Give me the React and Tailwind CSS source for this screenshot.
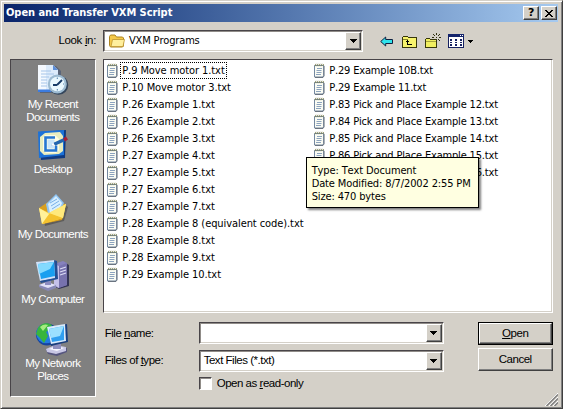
import React from "react";

const sunken =
  "border border-t-[#484448] border-l-[#484448] border-r-white border-b-white";
const raised =
  "border border-t-white border-l-white border-r-[#404040] border-b-[#404040] shadow-[inset_-1px_-1px_0_#808080]";
const listFont =
  "font-['DejaVu_Sans_Condensed','DejaVu_Sans',sans-serif] [font-stretch:condensed] [font-kerning:none] text-[11px]";

const leftFiles = [
  "P.9 Move motor 1.txt",
  "P.10 Move motor 3.txt",
  "P.26 Example 1.txt",
  "P.26 Example 2.txt",
  "P.26 Example 3.txt",
  "P.27 Example 4.txt",
  "P.27 Example 5.txt",
  "P.27 Example 6.txt",
  "P.27 Example 7.txt",
  "P.28 Example 8 (equivalent code).txt",
  "P.28 Example 8.txt",
  "P.28 Example 9.txt",
  "P.29 Example 10.txt",
];
const rightFiles = [
  "P.29 Example 10B.txt",
  "P.29 Example 11.txt",
  "P.83 Pick and Place Example 12.txt",
  "P.84 Pick and Place Example 13.txt",
  "P.85 Pick and Place Example 14.txt",
  "P.86 Pick and Place Example 15.txt",
  "P.87 Pick and Place Example 16.txt",
];

function NoteIcon() {
  return (
    <svg width="12" height="15" viewBox="0 0 12 15" className="shrink-0">
      <path d="M1.500 2.500h9.200v10l-1 1.500H1.500z" fill="#fbfcf4" stroke="#7488a0" />
      <path d="M11 3v10l-1 1.500H2" fill="none" stroke="#56606c" strokeWidth=".8" />
      <path d="M2 3.200l1-2.400M4 3.200l1-2.400M6 3.200l1-2.400M8 3.200l1-2.400M10 3l.6-1.800" stroke="#7c8050" strokeWidth=".9" />
      <path d="M4 5.500h5M3.500 7.500h5M3.500 9.500h5M3 11.500h5" stroke="#7f98b8" strokeWidth=".9" />
    </svg>
  );
}

function FileRow({ name, focused }) {
  return (
    <div className="flex h-[17px] items-center">
      <NoteIcon />
      <span
        className={
          "ml-[2px] h-[17px] pr-[2px] pl-[2.5px] leading-[17px] " +
          (focused ? "outline-1 -outline-offset-1 outline-dotted outline-black" : "")
        }
      >
        {name}
      </span>
    </div>
  );
}

function Arrow() {
  return (
    <svg width="7" height="4" viewBox="0 0 7 4" shapeRendering="crispEdges">
      <path d="M0 0h7v1H6v1H5v1H4v1H3V3H2V2H1V1H0z" />
    </svg>
  );
}

function Combo({ children, className = "" }) {
  return (
    <div className={"flex h-[22px] items-stretch bg-white " + sunken + " shadow-[inset_1px_1px_0_#908c88,inset_-1px_-1px_0_#d4d0c8] p-px " + className}>
      <div className="flex grow items-center">{children}</div>
      <div className={"flex w-4 items-center justify-center bg-[#d4d0c8] " + raised}>
        <Arrow />
      </div>
    </div>
  );
}

function RecentIcon() {
  return (
    <svg width="32" height="32" viewBox="0 0 32 32">
      <path d="M3 2h16l5 5v22H3z" fill="#2c4470" opacity=".45" />
      <path d="M1 1h15l5 5v22H1z" fill="#dcebfb" />
      <path d="M1 1h8v27H1z" fill="#f4f9ff" />
      <path d="M16 1l5 5h-5z" fill="#5d8ed8" />
      <path d="M4 7h10M4 10h13M4 13h8M4 16h6M4 19h6M4 22h6" stroke="#a6c5ea" strokeWidth="1.200" />
      <path d="M1 25.500h14V28H1z" fill="#3c7ce0" />
      <circle cx="21.500" cy="21" r="9.800" fill="#34465c" />
      <circle cx="20.300" cy="20" r="9.500" fill="#9dbbd2" />
      <circle cx="20.300" cy="20" r="7.300" fill="#e9f8ff" />
      <path d="M20 21l5-5M20 21h-4" stroke="#173b68" strokeWidth="1.800" />
      <path d="M20.300 13.500v1.500M20.300 25v1.500M26 20h1" stroke="#5280aa" />
    </svg>
  );
}

function DesktopIcon() {
  return (
    <svg width="32" height="32" viewBox="0 0 32 32">
      <path d="M3 3l26-2-1 28-24 2z" fill="#103a80" />
      <path d="M1 2.500L27 1v25L2 29z" fill="#1c72d8" />
      <path d="M3 8l5-4 15-1 3 4v15l-4 3-15 1-4-4z" fill="#e8edc0" />
      <path d="M8 6h10l4 4v11l-3 3H9l-3-3V9z" fill="#fdfde4" />
      <path d="M18 8.500H8.500v13H19v-5" fill="none" stroke="#2677d4" strokeWidth="2.600" />
      <path d="M10.500 10.500h7v9h-7z" fill="#c9e5fa" />
      <path d="M14 16.500l3-3 11-5 1.500 3-11 5z" fill="#2466ae" />
      <path d="M14 16.500l2.200-3 2 3.500z" fill="#fff" />
      <path d="M26 9.500l3-2 2 3-3 2z" fill="#a81d35" />
    </svg>
  );
}

function DocumentsIcon() {
  return (
    <svg width="32" height="32" viewBox="0 0 32 32">
      <path d="M5 16L18 3l13 10-4 14-19 5z" fill="#3c3a38" opacity=".5" />
      <path d="M2 14l9-6 18 2-4 16-19 4z" fill="#d99f1f" />
      <path d="M9 10L19 0l8 9-6 13-10-2z" fill="#8ec4f4" />
      <path d="M11 10l8-8 6 7-5 12-7-2z" fill="#d8efff" />
      <path d="M13 9l7-4M14 12l8-5M15 15l8-5" stroke="#7ab1e8" />
      <path d="M2 14l10 5L29 10l-3 14L5 30z" fill="#ffdc52" />
      <path d="M2 14l10 6-7 10z" fill="#fff19a" />
      <path d="M5 30l8-11 13 5z" fill="#f4c22e" />
      <path d="M12 19L29 10l-3 14z" fill="#ffe97c" />
    </svg>
  );
}

function ComputerIcon() {
  return (
    <svg width="33" height="32" viewBox="0 0 33 32">
      <path d="M18 6l10-3 5 3v21l-10 3-5-3z" fill="#333455" />
      <path d="M18 5l9-3 4 2v22l-9 3-4-3z" fill="#8681bd" />
      <path d="M18 5l5 2v22l-5-3z" fill="#c5c1ea" />
      <path d="M23 7l8-3v22l-8 3z" fill="#7772ae" />
      <path d="M24 10l6-2M24 13l6-2M24 16l6-2" stroke="#dcdcf6" strokeWidth="1.200" />
      <path d="M3 26l8-3 9 3v3l-8 3-9-4z" fill="#8788b6" />
      <path d="M3 26l8-3 9 3-8 3z" fill="#e0e0f7" />
      <path d="M9 20h6v6H9z" fill="#8c8cc0" />
      <path d="M0 3l19-2 2 18-17 3z" fill="#d0e2f9" />
      <path d="M21 2l1 18-17 4-1-2 15-3-1-18z" fill="#234e93" />
      <path d="M2 5l16-2 1 14L5 20z" fill="#199ff0" />
      <path d="M2 5l16-2-4 7-11 5z" fill="#83daff" />
    </svg>
  );
}

function NetworkIcon() {
  return (
    <svg width="33" height="33" viewBox="0 0 33 33">
      <circle cx="11" cy="11.500" r="11" fill="#15449f" />
      <circle cx="10" cy="10.500" r="9.800" fill="#237be0" />
      <path d="M2 5c3-5 9-6 14-3l-3 5-3 2 2 4-4 7-4-5-4-4z" fill="#39b53d" />
      <path d="M4 4c3-3 6-3 8-2L7 8z" fill="#a5ec80" />
      <path d="M10 27l9-4 12 2v4l-10 4-9-2z" fill="#56567f" />
      <path d="M10 26l9-4 11 2v4l-10 3-9-2z" fill="#c8c7e5" />
      <path d="M13 26l7-3 8 2-7 3z" fill="#f7f7ff" />
      <path d="M17 19h8v7h-8z" fill="#8f8fbe" />
      <path d="M12 5l19-4 1 18-17 4z" fill="#193e7d" />
      <path d="M11 4l18-3 1 17-15 3z" fill="#d9eafb" />
      <path d="M13 6l15-3v14l-12 2z" fill="#309ff0" />
      <path d="M13 6l15-3-4 10-9 2z" fill="#9ce0ff" />
    </svg>
  );
}

function Place({ icon, lines, className = "" }) {
  return (
    <div className={"flex flex-col items-center " + className}>
      <div className="h-[34px]">{icon}</div>
      {lines.map((l) => (
        <div key={l} className="h-[13px] text-[11.5px] leading-[13px] tracking-[-0.55px] whitespace-nowrap text-white">
          {l}
        </div>
      ))}
    </div>
  );
}

function FolderIcon() {
  return (
    <svg width="16" height="14" viewBox="0 0 16 14">
      <path d="M.5 11.500V2.500l1-1.500h4.500l1.500 2h6l1 1v8l-1 1H1.500z" fill="#f5c94a" stroke="#ad8420" />
      <path d="M2 12.500l1.500-7h12l-1.500 7z" fill="#ffef9d" stroke="#bd9430" strokeWidth=".8" />
    </svg>
  );
}

function Toolbar() {
  return (
    <div className="flex h-4 items-center">
      <svg width="13" height="11" viewBox="0 0 13 11">
        <path d="M.7 5.500l5-4.500v2.500h6.800v4H5.700V10z" fill="#2fe3ec" stroke="#102040" />
      </svg>
      <svg width="15" height="13" viewBox="0 0 15 13" className="ml-[9px]" shapeRendering="crispEdges">
        <path d="M.5 12.500v-10l1-1h4l1 1h8v10z" fill="#f7f36d" stroke="#38380c" />
        <path d="M1 4.500h5" stroke="#88852c" />
        <path d="M5 5h1v4h4v1H5zM4 6h3v1H4z" fill="#000" />
      </svg>
      <svg width="17" height="16" viewBox="0 0 17 16" className="ml-2" shapeRendering="crispEdges">
        <path d="M.5 14.500v-8l1-1h3l1 1h6v8z" fill="#f1ef60" stroke="#38380c" />
        <path d="M1 8h10v1H1z" fill="#a5a23c" />
        <path d="M11 0h1v2h-1zM11 7h1v2h-1zM7 4h2v1H7zM14 4h2v1h-2zM8 1h1v1H8zM9 2h1v1H9zM14 1h1v1h-1zM13 2h1v1h-1zM13 6h1v1h-1zM14 7h1v1h-1zM9 6h1v1H9zM11 4h1v1h-1z" fill="#303010" />
      </svg>
      <svg width="16" height="14" viewBox="0 0 16 14" className="ml-[6px]" shapeRendering="crispEdges">
        <path d="M.5.5h15v13H.5z" fill="#fff" stroke="#152060" />
        <path d="M0 0h16v3H0z" fill="#14246c" />
        <path d="M2 5h2v2H2zM7 5h2v2H7zM12 5h2v2h-2zM2 8h2v1H2zM7 8h2v1H7zM12 8h2v1h-2zM2 10h2v2H2zM7 10h2v2H7zM12 10h2v2h-2z" fill="#152060" />
        <path d="M12 1h1v1h-1zM14 1h1v1h-1z" fill="#fff" />
      </svg>
      <svg width="5" height="3" viewBox="0 0 5 3" className="ml-1" shapeRendering="crispEdges">
        <path d="M0 0h5v1H4v1H3v1H2V2H1V1H0z" />
      </svg>
    </div>
  );
}

function U({ children }) {
  return <span className="underline underline-offset-1">{children}</span>;
}

export default function App() {
  return (
    <div className="flex h-[409px] w-[563px] flex-col border border-t-[#d4d0c8] border-r-[#404040] border-b-[#404040] border-l-[#d4d0c8] bg-[#d4d0c8] px-[3px] pt-[3px] font-['Liberation_Sans',Arial,sans-serif] text-[11.5px] tracking-[-0.48px] text-black shadow-[inset_1px_1px_0_#fff,inset_-1px_-1px_0_#808080]">
      <div className="flex h-[18px] w-[554px] items-center bg-linear-to-r from-[#0a246a] to-[#a6caf0] pr-px pl-[2px]">
        <div className="grow font-['DejaVu_Sans_Condensed','DejaVu_Sans',sans-serif] text-[11px] leading-[18px] font-bold tracking-[-0.06px] text-white [font-stretch:condensed]">
          Open and Transfer VXM Script
        </div>
        <div className={"flex h-[14px] w-4 items-center justify-center bg-[#d4d0c8] font-['DejaVu_Sans',sans-serif] text-[11px] leading-[12px] font-bold " + raised}>
          ?
        </div>
        <div className={"ml-[2px] flex h-[14px] w-4 items-center justify-center bg-[#d4d0c8] " + raised}>
          <svg width="8" height="7" viewBox="0 0 8 7" shapeRendering="crispEdges">
            <path d="M0 0h2v1h1v1h2V1h1V0h2v1H7v1H6v1H5v1h1v1h1v1h1v1H6V6H5V5H3v1H2v1H0V6h1V5h1V4h1V3H2V2H1V1H0z" />
          </svg>
        </div>
      </div>

      <div className="mt-[8px] flex h-[22px] items-center">
        <div className="w-[99px] pr-[7px] text-right tracking-[-0.35px]">
          Look <U>i</U>n:
        </div>
        <Combo className="w-[260px]">
          <div className={"flex items-center gap-1 pl-1 tracking-[-0.16px] " + listFont}>
            <FolderIcon />
            VXM Programs
          </div>
        </Combo>
        <div className="ml-[17px]">
          <Toolbar />
        </div>
      </div>

      <div className="mt-[7px] ml-[6px] flex">
        <div className={"flex h-[338px] w-[86px] flex-col items-center bg-[#808080] pt-1 " + sunken}>
          <Place icon={<RecentIcon />} lines={["My Recent", "Documents"]} />
          <Place className="mt-[5px]" icon={<DesktopIcon />} lines={["Desktop"]} />
          <Place className="mt-[18px]" icon={<DocumentsIcon />} lines={["My Documents"]} />
          <Place className="mt-[18px]" icon={<ComputerIcon />} lines={["My Computer"]} />
          <Place className="mt-[17px]" icon={<NetworkIcon />} lines={["My Network", "Places"]} />
        </div>

        <div className="ml-[7px] flex w-[458px] flex-col">
          <div className={"relative flex h-[254px] w-[450px] bg-white pt-[2px] pl-[2px] whitespace-nowrap shadow-[inset_-1px_-1px_0_#d4d0c8] " + sunken + " " + listFont}>
            <div className="w-[207px] tracking-[-0.08px]">
              {leftFiles.map((f, i) => (
                <FileRow key={f} name={f} focused={i === 0} />
              ))}
            </div>
            <div className="tracking-[-0.17px]">
              {rightFiles.map((f) => (
                <FileRow key={f} name={f} />
              ))}
            </div>
            <div className="absolute top-[97px] left-[202px] h-[51px] w-[173px] border border-black bg-[#ffffe1] pt-[6px] pl-[5px] leading-[13px] tracking-[-0.13px] shadow-[2px_2px_2px_rgba(0,0,0,0.5)]">
              <div>Type: Text Document</div>
              <div>Date Modified: 8/7/2002 2:55 PM</div>
              <div>Size: 470 bytes</div>
            </div>
          </div>

          <div className="mt-[9px] flex">
            <div className="w-[96px] pl-[2px]">
              <div className="leading-[23px]">
                File <U>n</U>ame:
              </div>
              <div className="mt-[4px] leading-[23px]">
                Files of <U>t</U>ype:
              </div>
            </div>
            <div className="w-[245px]">
              <Combo />
              <Combo className="mt-[6px]">
                <span className="pl-[3px]">Text Files (*.txt)</span>
              </Combo>
              <div className="mt-[4px] flex items-center">
                <div className={"h-[13px] w-[13px] bg-white shadow-[inset_1px_1px_0_#908c88] " + sunken} />
                <span className="ml-[5px] leading-[14px]">
                  Open as <U>r</U>ead-only
                </span>
              </div>
            </div>
            <div className="ml-[34px] flex flex-col">
              <div className="h-[23px] w-[75px] border border-black">
                <div className={"h-[21px] text-center leading-[19px] " + raised}>
                  <U>O</U>pen
                </div>
              </div>
              <div className={"mt-[3px] h-[23px] w-[75px] text-center leading-[20px] " + raised}>Cancel</div>
            </div>
          </div>
          <svg width="13" height="13" viewBox="0 0 13 13" className="mt-auto mb-[-9px] ml-[442px]">
            <path d="M0 13L13 0M4 13l9-9M8 13l5-5" stroke="#fff" />
            <path d="M1.500 13L13 1.500M5.500 13L13 5.500M9.500 13L13 9.500" stroke="#808080" strokeWidth="1.500" />
          </svg>
        </div>
      </div>
    </div>
  );
}
